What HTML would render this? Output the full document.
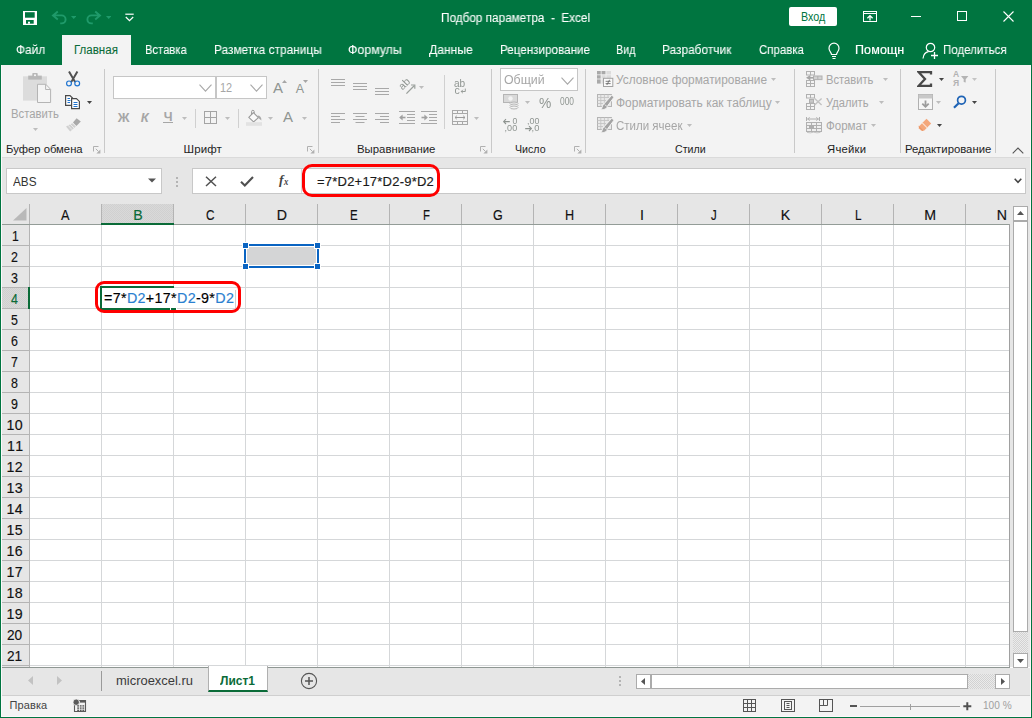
<!DOCTYPE html>
<html lang="ru"><head><meta charset="utf-8"><title>Подбор параметра - Excel</title>
<style>
html,body{margin:0;padding:0;background:#fff;}
body{width:1032px;height:718px;position:relative;overflow:hidden;font-family:"Liberation Sans","DejaVu Sans",sans-serif;}
.b{position:absolute;display:block;}
.t{position:absolute;white-space:pre;display:block;transform-origin:0 0;}
.dot{background:repeating-conic-gradient(#ebebeb 0 25%,#d2d2d2 0 50%) 0 0/2px 2px;}
.g{-webkit-text-stroke:0.15px currentColor;}
.dot2{background:repeating-conic-gradient(#d9d9d9 0 25%,#d0d0d0 0 50%) 0 0/2px 2px;}
#cellf i{font-style:normal;color:#2a80d0;}
</style></head>
<body>
<div id="titlebar" class="b" style="left:0;top:0;width:1032px;height:65px;background:#007540"></div>
<svg class="b" style="left:23px;top:11px;" width="14" height="14" viewBox="0 0 14 14"><rect x="0" y="0" width="14" height="14" fill="#fff"/><rect x="2" y="1.2" width="9.7" height="5.5" fill="#007540"/><rect x="3" y="9" width="7.7" height="3.7" fill="#007540"/><rect x="5" y="10.7" width="2" height="2" fill="#fff"/></svg>
<svg class="b" style="left:51px;top:10px;" width="16" height="15" viewBox="0 0 16 15"><path d="M6.8 1.4L2 5.4L6.8 9.4M2.2 5.4H10.6A4 4 0 0 1 10.6 13.4H9.2" fill="none" stroke="#1f9a6a" stroke-width="1.9" stroke-linejoin="miter"/></svg>
<svg class="b" style="left:70.7px;top:16px;" width="5.4" height="3" viewBox="0 0 5.4 3"><path d="M0 0H5.4 L2.7 3 Z" fill="#1f9a6a"/></svg>
<svg class="b" style="left:86px;top:10px;" width="16" height="15" viewBox="0 0 16 15"><path d="M9.2 1.4L14 5.4L9.2 9.4M13.8 5.4H5.4A4 4 0 0 0 5.4 13.4H6.8" fill="none" stroke="#1f9a6a" stroke-width="1.9" stroke-linejoin="miter"/></svg>
<svg class="b" style="left:105.8px;top:16px;" width="5.4" height="3" viewBox="0 0 5.4 3"><path d="M0 0H5.4 L2.7 3 Z" fill="#1f9a6a"/></svg>
<svg class="b" style="left:125px;top:13px;" width="9" height="9" viewBox="0 0 9 9"><path d="M0.3 1.2H8.7" stroke="#fff" stroke-width="1.2"/><path d="M0.8 4L4.5 7.6L8.2 4" fill="none" stroke="#fff" stroke-width="1.2"/></svg>
<span class="t" id="t1" style="left:441.00px;top:11px;font-size:12px;line-height:14px;color:#fff;transform:scaleX(0.9803);-webkit-text-stroke:0.08px;will-change:transform;">Подбор параметра  -  Excel</span>
<div class="b" style="left:789px;top:7px;width:48px;height:19px;background:#fff;border-radius:2px;"></div>
<span class="t" id="t2" style="left:801.00px;top:10px;font-size:12px;line-height:14px;color:#007540;transform:scaleX(0.8929);">Вход</span>
<svg class="b" style="left:863px;top:11px;" width="14" height="11" viewBox="0 0 14 11"><rect x="0.5" y="0.5" width="13" height="10" fill="none" stroke="#fff"/><path d="M0.5 2.5H13.5" stroke="#fff"/><path d="M7 9.6V4.8M4.4 7.2L7 4.6L9.6 7.2" fill="none" stroke="#fff" stroke-width="1.3"/></svg>
<div class="b" style="left:911px;top:16px;width:10px;height:1px;background:#fff;"></div>
<div class="b" style="left:957px;top:11px;width:10px;height:10px;border:1px solid #fff;box-sizing:border-box;"></div>
<svg class="b" style="left:1003px;top:11px;" width="11" height="11" viewBox="0 0 11 11"><path d="M0.5 0.5L10.5 10.5M10.5 0.5L0.5 10.5" stroke="#fff" stroke-width="1.1"/></svg>
<div class="b" style="left:62px;top:35px;width:69px;height:30px;background:#f3f3f3;"></div>
<span class="t" id="t3" style="left:16.00px;top:43px;font-size:12.5px;line-height:14px;color:#fff;transform:scaleX(0.9500);-webkit-text-stroke:0.08px;will-change:transform;">Файл</span>
<span class="t" id="t4" style="left:74.00px;top:43px;font-size:12.5px;line-height:14px;color:#0a6b38;transform:scaleX(0.9226);-webkit-text-stroke:0.08px;">Главная</span>
<span class="t" id="t5" style="left:145.30px;top:43px;font-size:12.5px;line-height:14px;color:#fff;transform:scaleX(0.9000);-webkit-text-stroke:0.08px;will-change:transform;">Вставка</span>
<span class="t" id="t6" style="left:214.30px;top:43px;font-size:12.5px;line-height:14px;color:#fff;transform:scaleX(0.9500);-webkit-text-stroke:0.08px;will-change:transform;">Разметка страницы</span>
<span class="t" id="t7" style="left:348.00px;top:43px;font-size:12.5px;line-height:14px;color:#fff;transform:scaleX(0.9870);-webkit-text-stroke:0.08px;will-change:transform;">Формулы</span>
<span class="t" id="t8" style="left:428.70px;top:43px;font-size:12.5px;line-height:14px;color:#fff;transform:scaleX(0.9689);-webkit-text-stroke:0.08px;will-change:transform;">Данные</span>
<span class="t" id="t9" style="left:499.70px;top:43px;font-size:12.5px;line-height:14px;color:#fff;transform:scaleX(0.9330);-webkit-text-stroke:0.08px;will-change:transform;">Рецензирование</span>
<span class="t" id="t10" style="left:616.30px;top:43px;font-size:12.5px;line-height:14px;color:#fff;transform:scaleX(0.8658);-webkit-text-stroke:0.08px;will-change:transform;">Вид</span>
<span class="t" id="t11" style="left:662.00px;top:43px;font-size:12.5px;line-height:14px;color:#fff;transform:scaleX(0.9503);-webkit-text-stroke:0.08px;will-change:transform;">Разработчик</span>
<span class="t" id="t12" style="left:758.70px;top:43px;font-size:12.5px;line-height:14px;color:#fff;transform:scaleX(0.9184);-webkit-text-stroke:0.08px;will-change:transform;">Справка</span>
<span class="t" id="t13" style="left:854.70px;top:43px;font-size:12.5px;line-height:14px;color:#fff;letter-spacing:0.120px;-webkit-text-stroke:0.2px;will-change:transform;">Помощн</span>
<span class="t" id="t14" style="left:942.70px;top:43px;font-size:12.5px;line-height:14px;color:#fff;transform:scaleX(0.9217);-webkit-text-stroke:0.08px;will-change:transform;">Поделиться</span>
<svg class="b" style="left:827px;top:42px;" width="14" height="18" viewBox="0 0 14 18"><path d="M4.5 12.5C4.5 10.5 2 9.5 2 6.2A5 5 0 0 1 12 6.2C12 9.5 9.5 10.5 9.5 12.5Z" fill="none" stroke="#fff" stroke-width="1.2"/><path d="M5 14.5H9M5.5 16.5H8.5" stroke="#fff" stroke-width="1.1"/></svg>
<svg class="b" style="left:922px;top:42px;" width="17" height="18" viewBox="0 0 17 18"><circle cx="8.5" cy="5.5" r="4.2" fill="none" stroke="#fff" stroke-width="1.2"/><path d="M1 16.5C1.5 12 4 10 6.5 9.6" fill="none" stroke="#fff" stroke-width="1.2"/><path d="M12.5 10V17M9 13.5H16" stroke="#fff" stroke-width="1.3"/></svg>
<div class="b" style="left:0px;top:65px;width:1032px;height:92px;background:#f3f3f3;"></div>
<div class="b" style="left:0px;top:157px;width:1032px;height:1px;background:#dadada;"></div>
<div class="b" style="left:104px;top:69px;width:1px;height:84px;background:#c9c9c9;"></div>
<div class="b" style="left:318px;top:69px;width:1px;height:84px;background:#c9c9c9;"></div>
<div class="b" style="left:491px;top:69px;width:1px;height:84px;background:#c9c9c9;"></div>
<div class="b" style="left:585px;top:69px;width:1px;height:84px;background:#c9c9c9;"></div>
<div class="b" style="left:794px;top:69px;width:1px;height:84px;background:#c9c9c9;"></div>
<div class="b" style="left:900px;top:69px;width:1px;height:84px;background:#c9c9c9;"></div>
<div class="b" style="left:995px;top:69px;width:1px;height:84px;background:#c9c9c9;"></div>
<span class="t" id="t15" style="left:6.00px;top:143px;font-size:11.5px;line-height:12px;color:#1e1e1e;transform:scaleX(0.9808);">Буфер обмена</span>
<span class="t" id="t16" style="left:183.50px;top:143px;font-size:11.5px;line-height:12px;color:#1e1e1e;letter-spacing:0.125px;">Шрифт</span>
<span class="t" id="t17" style="left:356.50px;top:143px;font-size:11.5px;line-height:12px;color:#1e1e1e;transform:scaleX(0.9905);">Выравнивание</span>
<span class="t" id="t18" style="left:515.00px;top:143px;font-size:11.5px;line-height:12px;color:#1e1e1e;transform:scaleX(0.9242);">Число</span>
<span class="t" id="t19" style="left:675.00px;top:143px;font-size:11.5px;line-height:12px;color:#1e1e1e;transform:scaleX(0.9242);">Стили</span>
<span class="t" id="t20" style="left:827.00px;top:143px;font-size:11.5px;line-height:12px;color:#1e1e1e;letter-spacing:0.250px;transform:scaleX(0.9812);">Ячейки</span>
<span class="t" id="t21" style="left:905.00px;top:143px;font-size:11.5px;line-height:12px;color:#1e1e1e;transform:scaleX(0.9852);">Редактирование</span>
<svg class="b" style="left:93px;top:146px;" width="8" height="8" viewBox="0 0 8 8"><path d="M0.5 5.5V0.5H5.5" fill="none" stroke="#b0b0b0" stroke-width="1"/><path d="M2.8 2.8L5.4 5.4" stroke="#b0b0b0" stroke-width="1"/><path d="M7.4 3.4V7.4H3.4Z" fill="#b0b0b0"/></svg>
<svg class="b" style="left:307px;top:146px;" width="8" height="8" viewBox="0 0 8 8"><path d="M0.5 5.5V0.5H5.5" fill="none" stroke="#b0b0b0" stroke-width="1"/><path d="M2.8 2.8L5.4 5.4" stroke="#b0b0b0" stroke-width="1"/><path d="M7.4 3.4V7.4H3.4Z" fill="#b0b0b0"/></svg>
<svg class="b" style="left:480px;top:146px;" width="8" height="8" viewBox="0 0 8 8"><path d="M0.5 5.5V0.5H5.5" fill="none" stroke="#b0b0b0" stroke-width="1"/><path d="M2.8 2.8L5.4 5.4" stroke="#b0b0b0" stroke-width="1"/><path d="M7.4 3.4V7.4H3.4Z" fill="#b0b0b0"/></svg>
<svg class="b" style="left:574px;top:146px;" width="8" height="8" viewBox="0 0 8 8"><path d="M0.5 5.5V0.5H5.5" fill="none" stroke="#b0b0b0" stroke-width="1"/><path d="M2.8 2.8L5.4 5.4" stroke="#b0b0b0" stroke-width="1"/><path d="M7.4 3.4V7.4H3.4Z" fill="#b0b0b0"/></svg>
<svg class="b" style="left:1012px;top:147px;" width="12" height="7" viewBox="0 0 12 7"><path d="M0.7 6.3L6 1L11.3 6.3" fill="none" stroke="#555" stroke-width="1.1"/></svg>
<svg class="b" style="left:23px;top:72px;" width="29" height="32" viewBox="0 0 29 32"><rect x="0" y="4.3" width="24" height="24.3" fill="#dcdcdc"/>
<rect x="5.2" y="3.6" width="13.6" height="4" fill="#b8b8b8"/><rect x="9.3" y="1" width="5.4" height="3.5" rx="0.8" fill="#b8b8b8"/><rect x="11" y="2.4" width="2" height="1.7" fill="#f3f3f3"/>
<path d="M14.5 12.3H22.8L27.6 17.3V30.5H14.5Z" fill="#f4f4f4" stroke="#b4b4b4"/><path d="M22.6 12.5V17.5H27.4" fill="none" stroke="#b4b4b4"/></svg>
<span class="t" id="t22" style="left:11.00px;top:107px;font-size:12px;line-height:14px;color:#a6a6a6;transform:scaleX(0.9412);">Вставить</span>
<svg class="b" style="left:33px;top:128px;" width="5" height="3" viewBox="0 0 5 3"><path d="M0 0H5 L2.5 3 Z" fill="#bdbdbd"/></svg>
<svg class="b" style="left:64px;top:70px;" width="18" height="18" viewBox="0 0 18 18"><path d="M5 1.6L10.6 11.2L12.4 12.6M13.4 1.6L7.8 11.2L6 12.6" stroke="#505050" stroke-width="2" fill="none"/>
<circle cx="5" cy="13.4" r="2.4" fill="#f3f3f3" stroke="#1f74d0" stroke-width="1.2"/><circle cx="13.2" cy="13.4" r="2.4" fill="#f3f3f3" stroke="#1f74d0" stroke-width="1.2"/></svg>
<svg class="b" style="left:65px;top:95px;" width="16" height="15" viewBox="0 0 16 15"><path d="M0.6 0.6H5L7.5 3V10.4H0.6Z" fill="#fff" stroke="#4a4a4a" stroke-width="1.2"/><path d="M2.5 3.5H5M2.5 5.5H5.5M2.5 7.5H5" stroke="#1f74d0"/>
<path d="M6.6 3.6H11.4L14.4 6.4V13.6H6.6Z" fill="#fff" stroke="#4a4a4a" stroke-width="1.2"/><path d="M8.5 7.5H12.5M8.5 9.5H12.5M8.5 11.5H12.5" stroke="#1f74d0"/></svg>
<svg class="b" style="left:87px;top:101px;" width="5" height="3" viewBox="0 0 5 3"><path d="M0 0H5 L2.5 3 Z" fill="#444"/></svg>
<svg class="b" style="left:65px;top:117px;" width="17" height="15" viewBox="0 0 17 15"><path d="M11.6 1.2L15.8 4.4L11.4 9L8 5.6Z" fill="#a9a9a9"/><path d="M7.4 6.2L10.8 9.6L5.2 14.4L1 9.6Z" fill="#d0d0d0"/>
<path d="M3 8.2L7 12.6M5 7L9 11" stroke="#f3f3f3" stroke-width="0.8"/></svg>
<div class="b" style="left:113px;top:76px;width:103px;height:23px;background:#fff;border:1px solid #c6c6c6;box-sizing:border-box;"></div>
<div class="b" style="left:216px;top:76px;width:51px;height:23px;background:#fff;border:1px solid #c6c6c6;box-sizing:border-box;"></div>
<svg class="b" style="left:199px;top:84px;" width="13" height="8" viewBox="0 0 13 8"><path d="M0.5 0.7L6.5 7.2L12.5 0.7" fill="none" stroke="#a8a8a8" stroke-width="1.1"/></svg>
<svg class="b" style="left:250px;top:84px;" width="13" height="8" viewBox="0 0 13 8"><path d="M0.5 0.7L6.5 7.2L12.5 0.7" fill="none" stroke="#a8a8a8" stroke-width="1.1"/></svg>
<span class="t" id="t23" style="left:220.00px;top:80px;font-size:13px;line-height:15px;color:#a6a6a6;transform:scaleX(0.8400);">12</span>
<span class="t" id="t24" style="left:273.00px;top:79px;font-size:15px;line-height:17px;color:#8f9591;">A</span>
<svg class="b" style="left:282px;top:80px;" width="5" height="3" viewBox="0 0 5 3"><path d="M0 3L2.5 0L5 3Z" fill="#a6a6a6"/></svg>
<span class="t" id="t25" style="left:295.75px;top:82px;font-size:12.5px;line-height:14px;color:#8f9591;">A</span>
<svg class="b" style="left:303px;top:80px;" width="5" height="3" viewBox="0 0 5 3"><path d="M0 0L2.5 3L5 0Z" fill="#a6a6a6"/></svg>
<span class="t" id="t26" style="left:117.75px;top:110px;font-size:13px;line-height:15px;color:#a6a6a6;font-weight:bold;">Ж</span>
<span class="t" id="t27" style="left:140.75px;top:110px;font-size:13px;line-height:15px;color:#a6a6a6;font-weight:bold;font-style:italic;">К</span>
<span class="t" id="t28" style="left:163.75px;top:110px;font-size:12.5px;line-height:14px;color:#a6a6a6;font-weight:bold;">Ч</span>
<div class="b" style="left:163px;top:122px;width:10px;height:1px;background:#a6a6a6;"></div>
<svg class="b" style="left:182px;top:117px;" width="5" height="3" viewBox="0 0 5 3"><path d="M0 0H5 L2.5 3 Z" fill="#bdbdbd"/></svg>
<div class="b" style="left:195px;top:109px;width:1px;height:19px;background:#d0d0d0;"></div>
<svg class="b" style="left:204px;top:111px;" width="13" height="13" viewBox="0 0 13 13"><rect x="0.5" y="0.5" width="12" height="12" fill="none" stroke="#a4a4a4"/><path d="M6.5 0.5V12.5M0.5 6.5H12.5" stroke="#a4a4a4"/></svg>
<svg class="b" style="left:225px;top:117px;" width="5" height="3" viewBox="0 0 5 3"><path d="M0 0H5 L2.5 3 Z" fill="#bdbdbd"/></svg>
<div class="b" style="left:238px;top:109px;width:1px;height:19px;background:#d0d0d0;"></div>
<svg class="b" style="left:246px;top:109px;" width="17" height="17" viewBox="0 0 17 17"><path d="M7.4 3.6L12.4 8.6L7.6 12.8L2.8 8.4Z" fill="#fafafa" stroke="#9a9a9a" stroke-width="1.1" stroke-linejoin="round"/><path d="M5.6 6V2.6A1.3 1.3 0 0 1 8.2 2.6V4.4" fill="none" stroke="#9a9a9a" stroke-width="1"/><path d="M11.6 6.6C13.8 6.6 15.6 8.4 15.4 11.4L12.4 9Z" fill="#a8a8a8"/><rect x="0" y="13.2" width="16" height="3.6" fill="#e2e2e2"/></svg>
<svg class="b" style="left:268px;top:117px;" width="5" height="3" viewBox="0 0 5 3"><path d="M0 0H5 L2.5 3 Z" fill="#bdbdbd"/></svg>
<span class="t" id="t29" style="left:283.00px;top:108px;font-size:15px;line-height:17px;color:#8f9591;">A</span>
<svg class="b" style="left:302px;top:117px;" width="5" height="3" viewBox="0 0 5 3"><path d="M0 0H5 L2.5 3 Z" fill="#bdbdbd"/></svg>
<svg class="b" style="left:331px;top:0px;" width="16" height="140" viewBox="0 0 16 140"><path d="M0 79.5H14M0 82.5H14M0 85.5H14" stroke="#a8a8a8"/></svg>
<svg class="b" style="left:353px;top:0px;" width="16" height="140" viewBox="0 0 16 140"><path d="M0 83.5H14M0 86.5H14M0 89.5H14" stroke="#a8a8a8"/></svg>
<svg class="b" style="left:375px;top:0px;" width="16" height="140" viewBox="0 0 16 140"><path d="M0 88.5H14M0 91.5H14M0 94.5H14" stroke="#a8a8a8"/></svg>
<svg class="b" style="left:331px;top:0px;" width="16" height="140" viewBox="0 0 16 140"><path d="M0 113.5H14M0 116.5H9M0 119.5H14M0 122.5H9" stroke="#a8a8a8"/></svg>
<svg class="b" style="left:353px;top:0px;" width="16" height="140" viewBox="0 0 16 140"><path d="M0 113.5H14M2.5 116.5H11.5M0 119.5H14M2.5 122.5H11.5" stroke="#a8a8a8"/></svg>
<svg class="b" style="left:375px;top:0px;" width="16" height="140" viewBox="0 0 16 140"><path d="M0 113.5H14M5 116.5H14M0 119.5H14M5 122.5H14" stroke="#a8a8a8"/></svg>
<svg class="b" style="left:398px;top:77px;" width="19" height="19" viewBox="0 0 19 19"><text x="0" y="0" font-size="10.5" font-family="Liberation Sans, sans-serif" fill="#8e9490" transform="translate(4.6 13.4) rotate(-45)">ab</text><path d="M8.4 16.6L16.2 8.8" fill="none" stroke="#9aa09c" stroke-width="1.3"/><path d="M13 8H16.8V11.8" fill="none" stroke="#9aa09c" stroke-width="1.2"/></svg>
<svg class="b" style="left:419px;top:86px;" width="5" height="3" viewBox="0 0 5 3"><path d="M0 0H5 L2.5 3 Z" fill="#bdbdbd"/></svg>
<svg class="b" style="left:399px;top:111px;" width="17" height="13" viewBox="0 0 17 13"><path d="M0 0.5H16M8 3.5H16M8 6.5H16M8 9.5H16M0 12.5H16" stroke="#a8a8a8"/><path d="M6.5 6.5H1.6" stroke="#a0a0a0" stroke-width="1.6"/><path d="M0.2 6.5L3.6 3.6V9.4Z" fill="#a0a0a0"/></svg>
<svg class="b" style="left:421px;top:111px;" width="17" height="13" viewBox="0 0 17 13"><path d="M0 0.5H16M8 3.5H16M8 6.5H16M8 9.5H16M0 12.5H16" stroke="#a8a8a8"/><path d="M0.5 6.5H5.4" stroke="#a0a0a0" stroke-width="1.6"/><path d="M6.8 6.5L3.4 3.6V9.4Z" fill="#a0a0a0"/></svg>
<div class="b" style="left:444px;top:75px;width:1px;height:54px;background:#d0d0d0;"></div>
<span class="t" id="t30" style="left:454.00px;top:77px;font-size:10.5px;line-height:12px;color:#8e9490;transform:scaleX(0.9583);">ab</span>
<span class="t" id="t31" style="left:454.50px;top:84px;font-size:10.5px;line-height:12px;color:#8e9490;">c</span>
<svg class="b" style="left:460px;top:88px;" width="6" height="6" viewBox="0 0 6 6"><path d="M5.3 0.6V3.5H1.2M2.9 1.8L1.2 3.5L2.9 5.2" fill="none" stroke="#8e9490" stroke-width="0.9"/></svg>
<svg class="b" style="left:452px;top:110px;" width="16" height="15" viewBox="0 0 16 15"><rect x="0.5" y="0.5" width="15" height="14" fill="none" stroke="#a8a8a8"/><path d="M0.5 3.5H15.5M0.5 11.5H15.5M5.5 0.5V3.5M10.5 0.5V3.5M5.5 11.5V14.5M10.5 11.5V14.5" stroke="#a8a8a8"/><path d="M3 7.5H13M4.8 5.8L3 7.5L4.8 9.2M11.2 5.8L13 7.5L11.2 9.2" fill="none" stroke="#9a9a9a"/></svg>
<svg class="b" style="left:474px;top:117px;" width="5" height="3" viewBox="0 0 5 3"><path d="M0 0H5 L2.5 3 Z" fill="#bdbdbd"/></svg>
<div class="b" style="left:500px;top:68px;width:78px;height:23px;background:#fff;border:1px solid #c6c6c6;box-sizing:border-box;"></div>
<span class="t" id="t32" style="left:504.00px;top:73px;font-size:12.5px;line-height:14px;color:#a6a6a6;transform:scaleX(0.9882);">Общий</span>
<svg class="b" style="left:561px;top:77px;" width="13" height="8" viewBox="0 0 13 8"><path d="M0.5 0.7L6.5 7.2L12.5 0.7" fill="none" stroke="#a8a8a8" stroke-width="1.1"/></svg>
<svg class="b" style="left:503px;top:94px;" width="17" height="16" viewBox="0 0 17 16"><rect x="0.5" y="0.5" width="14" height="8" fill="#d9d9d9" stroke="#b5b5b5"/><circle cx="7.5" cy="4.5" r="2.2" fill="#f3f3f3"/><ellipse cx="11" cy="9.5" rx="4" ry="1.5" fill="#f3f3f3" stroke="#b5b5b5"/><ellipse cx="11" cy="11.5" rx="4" ry="1.5" fill="#f3f3f3" stroke="#b5b5b5"/><ellipse cx="11" cy="13.5" rx="4" ry="1.5" fill="#f3f3f3" stroke="#b5b5b5"/></svg>
<svg class="b" style="left:525px;top:101px;" width="5" height="3" viewBox="0 0 5 3"><path d="M0 0H5 L2.5 3 Z" fill="#bdbdbd"/></svg>
<span class="t" id="t33" style="left:539.40px;top:94px;font-size:15px;line-height:17px;color:#909692;transform:scaleX(0.9231);">%</span>
<span class="t" id="t34" style="left:560.00px;top:96px;font-size:10px;line-height:11px;color:#909692;transform:scaleX(0.8400);">000</span>
<svg class="b" style="left:503px;top:117px;" width="16" height="16" viewBox="0 0 16 16"><text x="9.6" y="6.6" font-size="8.6" font-family="Liberation Sans, sans-serif" fill="#8e9490">0</text><text x="1.6" y="14.2" font-size="8.6" font-family="Liberation Sans, sans-serif" fill="#8e9490" textLength="12.6" lengthAdjust="spacingAndGlyphs">,00</text><path d="M6.8 4.6H0.8M3 2.2L0.6 4.6L3 7" fill="none" stroke="#8e9490" stroke-width="1.1"/></svg>
<svg class="b" style="left:525px;top:117px;" width="16" height="16" viewBox="0 0 16 16"><text x="2" y="6.6" font-size="8.6" font-family="Liberation Sans, sans-serif" fill="#8e9490" textLength="12.4" lengthAdjust="spacingAndGlyphs">,00</text><text x="6.6" y="14.2" font-size="8.6" font-family="Liberation Sans, sans-serif" fill="#8e9490" textLength="7.8" lengthAdjust="spacingAndGlyphs">,0</text><path d="M0.2 11.6H6.2M4 9.2L6.4 11.6L4 14" fill="none" stroke="#8e9490" stroke-width="1.1"/></svg>
<svg class="b" style="left:597px;top:71px;" width="17" height="16" viewBox="0 0 17 16"><rect x="0" y="0" width="14" height="12.6" fill="#dcdcdc"/><path d="M0 0H8.6V3.4H3.8V12.6H0Z" fill="#a9a9a9"/><path d="M4.2 0V12.6M9 0V12.6M0 3.8H14M0 8H14" stroke="#f3f3f3" stroke-width="0.8"/><rect x="6.5" y="7.3" width="9.3" height="8.2" fill="#fafafa" stroke="#a2a2a2"/><path d="M8.6 10.3H13.6M8.6 12.6H13.6M12.6 8.8L9.8 14" stroke="#6e6e6e" stroke-width="0.9"/></svg>
<svg class="b" style="left:597px;top:94px;" width="17" height="16" viewBox="0 0 17 16"><rect x="0.5" y="0.5" width="14" height="12" fill="#e9e9e9" stroke="#b4b4b4"/><path d="M0.5 3.5H14.5M0.5 6.5H9M0.5 9.5H6M3.8 0.5V12.5M7.4 0.5V9M11 0.5V4" stroke="#c4c4c4" stroke-width="0.9"/><path d="M14.8 1.2L17 3.2L10.8 11.6C10.6 14.2 7.6 15.9 3.6 15.9C5.4 14.6 4.6 12.4 6.6 10.2Z" fill="#a3a3a3" stroke="#f3f3f3" stroke-width="1"/><path d="M7.6 10.6L10.2 12.6" stroke="#f3f3f3" stroke-width="0.8"/></svg>
<svg class="b" style="left:597px;top:117px;" width="17" height="16" viewBox="0 0 17 16"><rect x="0.5" y="0.5" width="14" height="12" fill="#e9e9e9" stroke="#b4b4b4"/><path d="M0.5 3.5H14.5M0.5 6.5H9M0.5 9.5H6M3.8 0.5V12.5M7.4 0.5V9M11 0.5V4" stroke="#c4c4c4" stroke-width="0.9"/><path d="M14.8 1.2L17 3.2L10.8 11.6C10.6 14.2 7.6 15.9 3.6 15.9C5.4 14.6 4.6 12.4 6.6 10.2Z" fill="#a3a3a3" stroke="#f3f3f3" stroke-width="1"/><path d="M7.6 10.6L10.2 12.6" stroke="#f3f3f3" stroke-width="0.8"/></svg>
<span class="t" id="t35" style="left:615.50px;top:73px;font-size:12.5px;line-height:14px;color:#a6a6a6;transform:scaleX(0.9497);">Условное форматирование</span>
<svg class="b" style="left:771px;top:78px;" width="5" height="3" viewBox="0 0 5 3"><path d="M0 0H5 L2.5 3 Z" fill="#bdbdbd"/></svg>
<span class="t" id="t36" style="left:615.50px;top:96px;font-size:12.5px;line-height:14px;color:#a6a6a6;transform:scaleX(0.9571);">Форматировать как таблицу</span>
<svg class="b" style="left:775px;top:101px;" width="5" height="3" viewBox="0 0 5 3"><path d="M0 0H5 L2.5 3 Z" fill="#bdbdbd"/></svg>
<span class="t" id="t37" style="left:615.50px;top:119px;font-size:12.5px;line-height:14px;color:#a6a6a6;transform:scaleX(0.9212);">Стили ячеек</span>
<svg class="b" style="left:687px;top:124px;" width="5" height="3" viewBox="0 0 5 3"><path d="M0 0H5 L2.5 3 Z" fill="#bdbdbd"/></svg>
<svg class="b" style="left:806px;top:71px;" width="17" height="17" viewBox="0 0 17 17"><rect x="0.5" y="0.5" width="8" height="3.5" fill="none" stroke="#b0b0b0"/><path d="M4.5 0.5V4" stroke="#b0b0b0"/><rect x="0.5" y="9.5" width="8" height="6" fill="none" stroke="#b0b0b0"/><path d="M4.5 9.5V15.5M0.5 12.5H8.5" stroke="#b0b0b0"/><rect x="7.5" y="5" width="8.5" height="3.6" fill="#d2d2d2" stroke="#b0b0b0"/><path d="M11.8 5V8.6" stroke="#b0b0b0"/><path d="M0 6.8L4.4 4V9.6Z" fill="#a6a6a6"/><path d="M4 6.8H7.5" stroke="#a6a6a6" stroke-width="1.6"/></svg>
<svg class="b" style="left:806px;top:94px;" width="17" height="17" viewBox="0 0 17 17"><rect x="0.5" y="0.5" width="8" height="3.5" fill="none" stroke="#b0b0b0"/><path d="M4.5 0.5V4" stroke="#b0b0b0"/><rect x="3.5" y="5.5" width="4" height="3.5" fill="#c6c6c6" stroke="#b0b0b0"/><rect x="0.5" y="9.5" width="8" height="6" fill="none" stroke="#b0b0b0"/><path d="M4.5 9.5V15.5M0.5 12.5H8.5" stroke="#b0b0b0"/><path d="M8.6 4.4L15.6 11M15.6 4.4L8.6 11" stroke="#c2c2c2" stroke-width="1.4"/></svg>
<svg class="b" style="left:806px;top:117px;" width="17" height="17" viewBox="0 0 17 17"><path d="M0.5 0V4M13.5 0V4M1.5 2H12.5" stroke="#b0b0b0"/><path d="M3.8 0.4L1.6 2L3.8 3.6M10.2 0.4L12.4 2L10.2 3.6" fill="none" stroke="#b0b0b0" stroke-width="0.9"/><rect x="0.5" y="5.5" width="15" height="9" fill="#eeeeee" stroke="#b0b0b0"/><path d="M5.5 5.5V14.5M10.5 5.5V14.5M0.5 8.5H15.5M0.5 11.5H15.5" stroke="#b0b0b0"/><rect x="3" y="8" width="5" height="4" fill="#adadad"/><path d="M1 15.4Q4.2 16.4 7.6 15.2Q11 16.4 14.4 15.4" fill="none" stroke="#c0c0c0" stroke-width="0.9"/></svg>
<span class="t" id="t38" style="left:826.00px;top:73px;font-size:12.5px;line-height:14px;color:#a6a6a6;transform:scaleX(0.8942);">Вставить</span>
<svg class="b" style="left:883px;top:78px;" width="5" height="3" viewBox="0 0 5 3"><path d="M0 0H5 L2.5 3 Z" fill="#bdbdbd"/></svg>
<span class="t" id="t39" style="left:826.00px;top:96px;font-size:12.5px;line-height:14px;color:#a6a6a6;transform:scaleX(0.8906);">Удалить</span>
<svg class="b" style="left:879px;top:101px;" width="5" height="3" viewBox="0 0 5 3"><path d="M0 0H5 L2.5 3 Z" fill="#bdbdbd"/></svg>
<span class="t" id="t40" style="left:826.00px;top:119px;font-size:12.5px;line-height:14px;color:#a6a6a6;transform:scaleX(0.9222);">Формат</span>
<svg class="b" style="left:871px;top:124px;" width="5" height="3" viewBox="0 0 5 3"><path d="M0 0H5 L2.5 3 Z" fill="#bdbdbd"/></svg>
<svg class="b" style="left:917px;top:71px;" width="16" height="16" viewBox="0 0 16 16"><path d="M14 3.5V1H1.5L8 8L1.5 15H14V12.5" fill="none" stroke="#484848" stroke-width="2.3"/></svg>
<svg class="b" style="left:939px;top:78px;" width="5" height="3" viewBox="0 0 5 3"><path d="M0 0H5 L2.5 3 Z" fill="#444"/></svg>
<svg class="b" style="left:918px;top:94px;" width="15" height="16" viewBox="0 0 15 16"><rect x="0.5" y="0.5" width="14" height="15" fill="#f6f6f6" stroke="#b0b0b0"/><rect x="0.5" y="0.5" width="14" height="4" fill="#c8c8c8"/><path d="M7.5 6.4V12.6M4.3 9.6L7.5 12.8L10.7 9.6" fill="none" stroke="#9c9c9c" stroke-width="1.8"/></svg>
<svg class="b" style="left:936px;top:101px;" width="5" height="3" viewBox="0 0 5 3"><path d="M0 0H5 L2.5 3 Z" fill="#bdbdbd"/></svg>
<svg class="b" style="left:918px;top:118px;" width="14" height="14" viewBox="0 0 14 14"><path d="M8.5 0.8L13.2 5.5L6 12.7H3.2L0.8 10.3V8.5Z" fill="#f4a77a"/><path d="M4.2 4.8L9.2 9.8" stroke="#fbe0cf" stroke-width="1.2"/><path d="M0.8 8.5L5 12.7" stroke="#e58e5e"/></svg>
<svg class="b" style="left:937px;top:124px;" width="5" height="3" viewBox="0 0 5 3"><path d="M0 0H5 L2.5 3 Z" fill="#444"/></svg>
<span class="t" id="t41" style="left:953.00px;top:69px;font-size:8.5px;line-height:10px;color:#b2b2b2;font-weight:bold;">А</span>
<span class="t" id="t42" style="left:953.00px;top:78px;font-size:8.5px;line-height:10px;color:#b2b2b2;font-weight:bold;">Я</span>
<svg class="b" style="left:961px;top:76px;" width="8" height="8" viewBox="0 0 8 8"><path d="M0 0H7.4L4.7 3.2V6.6L2.7 6V3.2Z" fill="#b4b4b4"/></svg>
<svg class="b" style="left:972px;top:78px;" width="5" height="3" viewBox="0 0 5 3"><path d="M0 0H5 L2.5 3 Z" fill="#c4c4c4"/></svg>
<svg class="b" style="left:953px;top:95px;" width="14" height="14" viewBox="0 0 14 14"><circle cx="8.5" cy="5.2" r="3.9" fill="none" stroke="#1e63b5" stroke-width="1.7"/><path d="M5.6 8.2L1 12.8" stroke="#1e63b5" stroke-width="2.2"/></svg>
<svg class="b" style="left:972px;top:101px;" width="5" height="3" viewBox="0 0 5 3"><path d="M0 0H5 L2.5 3 Z" fill="#444"/></svg>
<div class="b" style="left:0px;top:158px;width:1032px;height:46px;background:#e6e6e6;"></div>
<div class="b" style="left:6px;top:168px;width:156px;height:26px;background:#fff;border:1px solid #c8c8c8;box-sizing:border-box;"></div>
<span class="t" id="t43" style="left:12.50px;top:175px;font-size:12.5px;line-height:14px;color:#333;transform:scaleX(0.9400);">ABS</span>
<svg class="b" style="left:148px;top:178px;" width="8" height="5" viewBox="0 0 8 5"><path d="M0 0.5H8L4 4.5Z" fill="#555"/></svg>
<div class="b" style="left:176px;top:177px;width:2px;height:2px;background:#b4b4b4;"></div>
<div class="b" style="left:176px;top:181px;width:2px;height:2px;background:#b4b4b4;"></div>
<div class="b" style="left:176px;top:185px;width:2px;height:2px;background:#b4b4b4;"></div>
<div class="b" style="left:192px;top:168px;width:834px;height:26px;background:#fff;border:1px solid #c8c8c8;box-sizing:border-box;"></div>
<div class="b" style="left:301px;top:169px;width:1px;height:24px;background:#dcdcdc;"></div>
<svg class="b" style="left:205px;top:176px;" width="12" height="11" viewBox="0 0 12 11"><path d="M1 0.8L11 10M11 0.8L1 10" stroke="#505050" stroke-width="1.5"/></svg>
<svg class="b" style="left:240px;top:176px;" width="14" height="11" viewBox="0 0 14 11"><path d="M1 5.8L4.8 9.4L13 0.9" fill="none" stroke="#505050" stroke-width="2.1"/></svg>
<span class="t" id="t44" style="left:279.00px;top:172px;font-size:13.5px;line-height:15px;color:#444;font-weight:bold;font-style:italic;font-family:'Liberation Serif',serif;">f</span>
<span class="t" id="t45" style="left:283.80px;top:176px;font-size:10px;line-height:11px;color:#444;font-weight:bold;font-style:italic;transform:scaleX(0.8667);font-family:'Liberation Serif',serif;">x</span>
<span class="t" id="t46" style="left:317.00px;top:174px;font-size:13px;line-height:15px;color:#1a1a1a;letter-spacing:0.220px;-webkit-text-stroke:0.15px;">=7*D2+17*D2-9*D2</span>
<svg class="b" style="left:1014px;top:178px;" width="8" height="6" viewBox="0 0 8 6"><path d="M0.7 0.8L4 4.3L7.3 0.8" fill="none" stroke="#444" stroke-width="1.6"/></svg>
<div class="b" style="left:302px;top:164px;width:137.6px;height:32.5px;border:3px solid #ff0000;box-sizing:border-box;border-radius:10px;"></div>
<div class="b" style="left:0px;top:204px;width:1032px;height:463px;background:#e6e6e6;"></div>
<div class="b" style="left:30px;top:225px;width:980px;height:442px;background:#fff;"></div>
<div class="b dot2" style="left:102px;top:204px;width:71px;height:19px;"></div>
<div class="b" style="left:101px;top:223px;width:73px;height:2px;background:#0a6b38;"></div>
<div class="b dot2" style="left:2px;top:288px;width:26px;height:20px;"></div>
<svg class="b" style="left:13px;top:208px;" width="14" height="13" viewBox="0 0 14 13"><path d="M13.5 0V12.5H0Z" fill="#b9b9b9"/></svg>
<div class="b" style="left:29px;top:204px;width:1px;height:20px;background:#b4b4b4;"></div>
<span class="t" id="t47" style="left:61.00px;top:207px;font-size:14.2px;line-height:16px;color:#111;transform:scaleX(0.9000);-webkit-text-stroke:0.15px;">A</span>
<div class="b" style="left:101px;top:204px;width:1px;height:20px;background:#b4b4b4;"></div>
<span class="t" id="t48" style="left:133.25px;top:207px;font-size:14.2px;line-height:16px;color:#0a6b38;-webkit-text-stroke:0.15px;">B</span>
<div class="b" style="left:101px;top:225px;width:1px;height:442px;background:#d5d7d9;"></div>
<div class="b" style="left:173px;top:204px;width:1px;height:20px;background:#b4b4b4;"></div>
<span class="t" id="t49" style="left:205.85px;top:207px;font-size:14.2px;line-height:16px;color:#111;transform:scaleX(0.8300);-webkit-text-stroke:0.15px;">C</span>
<div class="b" style="left:173px;top:225px;width:1px;height:442px;background:#d5d7d9;"></div>
<div class="b" style="left:245px;top:204px;width:1px;height:20px;background:#b4b4b4;"></div>
<span class="t" id="t50" style="left:276.75px;top:207px;font-size:14.2px;line-height:16px;color:#111;-webkit-text-stroke:0.15px;">D</span>
<div class="b" style="left:245px;top:225px;width:1px;height:442px;background:#d5d7d9;"></div>
<div class="b" style="left:317px;top:204px;width:1px;height:20px;background:#b4b4b4;"></div>
<span class="t" id="t51" style="left:349.75px;top:207px;font-size:14.2px;line-height:16px;color:#111;transform:scaleX(0.8125);-webkit-text-stroke:0.15px;">E</span>
<div class="b" style="left:317px;top:225px;width:1px;height:442px;background:#d5d7d9;"></div>
<div class="b" style="left:389px;top:204px;width:1px;height:20px;background:#b4b4b4;"></div>
<span class="t" id="t52" style="left:422.50px;top:207px;font-size:14.2px;line-height:16px;color:#111;transform:scaleX(0.8000);-webkit-text-stroke:0.15px;">F</span>
<div class="b" style="left:389px;top:225px;width:1px;height:442px;background:#d5d7d9;"></div>
<div class="b" style="left:461px;top:204px;width:1px;height:20px;background:#b4b4b4;"></div>
<span class="t" id="t53" style="left:493.10px;top:207px;font-size:14.2px;line-height:16px;color:#111;transform:scaleX(0.8800);-webkit-text-stroke:0.15px;">G</span>
<div class="b" style="left:461px;top:225px;width:1px;height:442px;background:#d5d7d9;"></div>
<div class="b" style="left:533px;top:204px;width:1px;height:20px;background:#b4b4b4;"></div>
<span class="t" id="t54" style="left:565.00px;top:207px;font-size:14.2px;line-height:16px;color:#111;transform:scaleX(0.8889);-webkit-text-stroke:0.15px;">H</span>
<div class="b" style="left:533px;top:225px;width:1px;height:442px;background:#d5d7d9;"></div>
<div class="b" style="left:605px;top:204px;width:1px;height:20px;background:#b4b4b4;"></div>
<span class="t" id="t55" style="left:640.10px;top:207px;font-size:14.2px;line-height:16px;color:#111;-webkit-text-stroke:0.15px;">I</span>
<div class="b" style="left:605px;top:225px;width:1px;height:442px;background:#d5d7d9;"></div>
<div class="b" style="left:677px;top:204px;width:1px;height:20px;background:#b4b4b4;"></div>
<span class="t" id="t56" style="left:711.40px;top:207px;font-size:14.2px;line-height:16px;color:#111;transform:scaleX(0.8000);-webkit-text-stroke:0.15px;">J</span>
<div class="b" style="left:677px;top:225px;width:1px;height:442px;background:#d5d7d9;"></div>
<div class="b" style="left:749px;top:204px;width:1px;height:20px;background:#b4b4b4;"></div>
<span class="t" id="t57" style="left:780.70px;top:207px;font-size:14.2px;line-height:16px;color:#111;-webkit-text-stroke:0.15px;">K</span>
<div class="b" style="left:749px;top:225px;width:1px;height:442px;background:#d5d7d9;"></div>
<div class="b" style="left:821px;top:204px;width:1px;height:20px;background:#b4b4b4;"></div>
<span class="t" id="t58" style="left:854.60px;top:207px;font-size:14.2px;line-height:16px;color:#111;transform:scaleX(0.8286);-webkit-text-stroke:0.15px;">L</span>
<div class="b" style="left:821px;top:225px;width:1px;height:442px;background:#d5d7d9;"></div>
<div class="b" style="left:893px;top:204px;width:1px;height:20px;background:#b4b4b4;"></div>
<span class="t" id="t59" style="left:924.20px;top:207px;font-size:14.2px;line-height:16px;color:#111;-webkit-text-stroke:0.15px;">M</span>
<div class="b" style="left:893px;top:225px;width:1px;height:442px;background:#d5d7d9;"></div>
<div class="b" style="left:965px;top:204px;width:1px;height:20px;background:#b4b4b4;"></div>
<span class="t" id="t60" style="left:996.75px;top:207px;font-size:14.2px;line-height:16px;color:#111;-webkit-text-stroke:0.15px;">N</span>
<div class="b" style="left:965px;top:225px;width:1px;height:442px;background:#d5d7d9;"></div>
<div class="b" style="left:0px;top:224px;width:1010px;height:1px;background:#939c97;"></div>
<div class="b" style="left:29px;top:225px;width:1px;height:442px;background:#b4b4b4;"></div>
<div class="b" style="left:30px;top:245px;width:980px;height:1px;background:#d5d7d9;"></div>
<div class="b" style="left:2px;top:245px;width:27px;height:1px;background:#b4b4b4;"></div>
<span class="t" id="t61" style="left:11.90px;top:228px;font-size:14.2px;line-height:16px;color:#111;transform:scaleX(0.8571);-webkit-text-stroke:0.15px;">1</span>
<div class="b" style="left:30px;top:266px;width:980px;height:1px;background:#d5d7d9;"></div>
<div class="b" style="left:2px;top:266px;width:27px;height:1px;background:#b4b4b4;"></div>
<span class="t" id="t62" style="left:11.40px;top:249px;font-size:14.2px;line-height:16px;color:#111;transform:scaleX(0.8750);-webkit-text-stroke:0.15px;">2</span>
<div class="b" style="left:30px;top:287px;width:980px;height:1px;background:#d5d7d9;"></div>
<div class="b" style="left:2px;top:287px;width:27px;height:1px;background:#b4b4b4;"></div>
<span class="t" id="t63" style="left:11.40px;top:270px;font-size:14.2px;line-height:16px;color:#111;transform:scaleX(0.8750);-webkit-text-stroke:0.15px;">3</span>
<div class="b" style="left:30px;top:308px;width:980px;height:1px;background:#d5d7d9;"></div>
<div class="b" style="left:2px;top:308px;width:27px;height:1px;background:#b4b4b4;"></div>
<span class="t" id="t64" style="left:11.40px;top:291px;font-size:14.2px;line-height:16px;color:#0a6b38;transform:scaleX(0.8750);-webkit-text-stroke:0.15px;">4</span>
<div class="b" style="left:30px;top:329px;width:980px;height:1px;background:#d5d7d9;"></div>
<div class="b" style="left:2px;top:329px;width:27px;height:1px;background:#b4b4b4;"></div>
<span class="t" id="t65" style="left:11.40px;top:312px;font-size:14.2px;line-height:16px;color:#111;transform:scaleX(0.8750);-webkit-text-stroke:0.15px;">5</span>
<div class="b" style="left:30px;top:350px;width:980px;height:1px;background:#d5d7d9;"></div>
<div class="b" style="left:2px;top:350px;width:27px;height:1px;background:#b4b4b4;"></div>
<span class="t" id="t66" style="left:11.40px;top:333px;font-size:14.2px;line-height:16px;color:#111;transform:scaleX(0.8750);-webkit-text-stroke:0.15px;">6</span>
<div class="b" style="left:30px;top:371px;width:980px;height:1px;background:#d5d7d9;"></div>
<div class="b" style="left:2px;top:371px;width:27px;height:1px;background:#b4b4b4;"></div>
<span class="t" id="t67" style="left:11.40px;top:354px;font-size:14.2px;line-height:16px;color:#111;transform:scaleX(0.8750);-webkit-text-stroke:0.15px;">7</span>
<div class="b" style="left:30px;top:392px;width:980px;height:1px;background:#d5d7d9;"></div>
<div class="b" style="left:2px;top:392px;width:27px;height:1px;background:#b4b4b4;"></div>
<span class="t" id="t68" style="left:11.40px;top:375px;font-size:14.2px;line-height:16px;color:#111;transform:scaleX(0.8750);-webkit-text-stroke:0.15px;">8</span>
<div class="b" style="left:30px;top:413px;width:980px;height:1px;background:#d5d7d9;"></div>
<div class="b" style="left:2px;top:413px;width:27px;height:1px;background:#b4b4b4;"></div>
<span class="t" id="t69" style="left:11.40px;top:396px;font-size:14.2px;line-height:16px;color:#111;transform:scaleX(0.8750);-webkit-text-stroke:0.15px;">9</span>
<div class="b" style="left:30px;top:434px;width:980px;height:1px;background:#d5d7d9;"></div>
<div class="b" style="left:2px;top:434px;width:27px;height:1px;background:#b4b4b4;"></div>
<span class="t" id="t70" style="left:6.50px;top:417px;font-size:14.2px;line-height:16px;color:#111;letter-spacing:0.400px;-webkit-text-stroke:0.15px;">10</span>
<div class="b" style="left:30px;top:455px;width:980px;height:1px;background:#d5d7d9;"></div>
<div class="b" style="left:2px;top:455px;width:27px;height:1px;background:#b4b4b4;"></div>
<span class="t" id="t71" style="left:7.00px;top:438px;font-size:14.2px;line-height:16px;color:#111;letter-spacing:1.400px;-webkit-text-stroke:0.15px;">11</span>
<div class="b" style="left:30px;top:476px;width:980px;height:1px;background:#d5d7d9;"></div>
<div class="b" style="left:2px;top:476px;width:27px;height:1px;background:#b4b4b4;"></div>
<span class="t" id="t72" style="left:6.50px;top:459px;font-size:14.2px;line-height:16px;color:#111;letter-spacing:0.400px;-webkit-text-stroke:0.15px;">12</span>
<div class="b" style="left:30px;top:497px;width:980px;height:1px;background:#d5d7d9;"></div>
<div class="b" style="left:2px;top:497px;width:27px;height:1px;background:#b4b4b4;"></div>
<span class="t" id="t73" style="left:6.50px;top:480px;font-size:14.2px;line-height:16px;color:#111;letter-spacing:0.400px;-webkit-text-stroke:0.15px;">13</span>
<div class="b" style="left:30px;top:518px;width:980px;height:1px;background:#d5d7d9;"></div>
<div class="b" style="left:2px;top:518px;width:27px;height:1px;background:#b4b4b4;"></div>
<span class="t" id="t74" style="left:6.50px;top:501px;font-size:14.2px;line-height:16px;color:#111;letter-spacing:0.400px;-webkit-text-stroke:0.15px;">14</span>
<div class="b" style="left:30px;top:539px;width:980px;height:1px;background:#d5d7d9;"></div>
<div class="b" style="left:2px;top:539px;width:27px;height:1px;background:#b4b4b4;"></div>
<span class="t" id="t75" style="left:6.50px;top:522px;font-size:14.2px;line-height:16px;color:#111;letter-spacing:0.400px;-webkit-text-stroke:0.15px;">15</span>
<div class="b" style="left:30px;top:560px;width:980px;height:1px;background:#d5d7d9;"></div>
<div class="b" style="left:2px;top:560px;width:27px;height:1px;background:#b4b4b4;"></div>
<span class="t" id="t76" style="left:6.50px;top:543px;font-size:14.2px;line-height:16px;color:#111;letter-spacing:0.400px;-webkit-text-stroke:0.15px;">16</span>
<div class="b" style="left:30px;top:581px;width:980px;height:1px;background:#d5d7d9;"></div>
<div class="b" style="left:2px;top:581px;width:27px;height:1px;background:#b4b4b4;"></div>
<span class="t" id="t77" style="left:6.50px;top:564px;font-size:14.2px;line-height:16px;color:#111;letter-spacing:0.400px;-webkit-text-stroke:0.15px;">17</span>
<div class="b" style="left:30px;top:602px;width:980px;height:1px;background:#d5d7d9;"></div>
<div class="b" style="left:2px;top:602px;width:27px;height:1px;background:#b4b4b4;"></div>
<span class="t" id="t78" style="left:6.50px;top:585px;font-size:14.2px;line-height:16px;color:#111;letter-spacing:0.400px;-webkit-text-stroke:0.15px;">18</span>
<div class="b" style="left:30px;top:623px;width:980px;height:1px;background:#d5d7d9;"></div>
<div class="b" style="left:2px;top:623px;width:27px;height:1px;background:#b4b4b4;"></div>
<span class="t" id="t79" style="left:6.50px;top:606px;font-size:14.2px;line-height:16px;color:#111;letter-spacing:0.400px;-webkit-text-stroke:0.15px;">19</span>
<div class="b" style="left:30px;top:644px;width:980px;height:1px;background:#d5d7d9;"></div>
<div class="b" style="left:2px;top:644px;width:27px;height:1px;background:#b4b4b4;"></div>
<span class="t" id="t80" style="left:6.50px;top:627px;font-size:14.2px;line-height:16px;color:#111;transform:scaleX(0.9625);-webkit-text-stroke:0.15px;">20</span>
<div class="b" style="left:30px;top:665px;width:980px;height:1px;background:#d5d7d9;"></div>
<div class="b" style="left:2px;top:665px;width:27px;height:1px;background:#b4b4b4;"></div>
<span class="t" id="t81" style="left:6.50px;top:648px;font-size:14.2px;line-height:16px;color:#111;transform:scaleX(0.9625);-webkit-text-stroke:0.15px;">21</span>
<div class="b" style="left:28px;top:287px;width:2px;height:22px;background:#0a6b38;"></div>
<div class="b" style="left:101px;top:223px;width:73px;height:2px;background:#0a6b38;"></div>
<div class="b" style="left:1009px;top:224px;width:1px;height:444px;background:#a0a0a0;"></div>
<div class="b" style="left:0px;top:667px;width:1010px;height:1px;background:#8f9793;"></div>
<div class="b" style="left:247px;top:247px;width:69px;height:18px;background:#d4d5d6;"></div>
<div class="b" style="left:244px;top:244px;width:75px;height:24px;border:2px solid #0a64c2;box-sizing:border-box;"></div>
<div class="b" style="left:243px;top:243px;width:5px;height:5px;background:#0a64c2;outline:1px solid #fff;"></div>
<div class="b" style="left:315px;top:243px;width:5px;height:5px;background:#0a64c2;outline:1px solid #fff;"></div>
<div class="b" style="left:243px;top:264px;width:5px;height:5px;background:#0a64c2;outline:1px solid #fff;"></div>
<div class="b" style="left:315px;top:264px;width:5px;height:5px;background:#0a64c2;outline:1px solid #fff;"></div>
<div class="b" style="left:102px;top:288px;width:136px;height:20px;background:#fff;"></div>
<div class="b" style="left:100px;top:286px;width:74px;height:2px;background:#0a6b38;"></div>
<div class="b" style="left:100px;top:286px;width:2px;height:24px;background:#0a6b38;"></div>
<div class="b" style="left:100px;top:308px;width:74px;height:2px;background:#0a6b38;"></div>
<div class="b" style="left:171px;top:308px;width:5px;height:4px;background:#0a6b38;outline:1px solid #fff;"></div>
<span class="t" id="cellf" style="left:104.00px;top:289px;font-size:14.3px;line-height:18px;color:#000;-webkit-text-stroke:0.15px;letter-spacing:0.333px;transform:scaleX(1.0000)">=7*<i>D2</i>+17*<i>D2</i>-9*<i>D2</i></span>
<div class="b" style="left:235px;top:290px;width:1px;height:18px;background:#cfcfcf;"></div>
<div class="b" style="left:95.3px;top:281px;width:145.7px;height:32.3px;border:3px solid #ff0000;box-sizing:border-box;border-radius:9px;"></div>
<div class="b" style="left:0px;top:668px;width:1032px;height:27px;background:#e6e6e6;"></div>
<svg class="b" style="left:28px;top:676px;" width="5" height="9" viewBox="0 0 5 9"><path d="M5 0V9L0 4.5Z" fill="#c2c2c2"/></svg>
<svg class="b" style="left:57px;top:676px;" width="5" height="9" viewBox="0 0 5 9"><path d="M0 0V9L5 4.5Z" fill="#c2c2c2"/></svg>
<div class="b" style="left:101px;top:671px;width:1px;height:20px;background:#9a9a9a;"></div>
<span class="t" id="t82" style="left:116.30px;top:673px;font-size:13.5px;line-height:15px;color:#3a3a3a;transform:scaleX(0.9587);">microexcel.ru</span>
<div class="b" style="left:208px;top:666px;width:60px;height:26px;background:#fff;box-sizing:border-box;border-left:1px solid #b0b0b0;border-right:1px solid #b0b0b0;border-bottom:2px solid #0a6b38;"></div>
<span class="t" id="t83" style="left:220.00px;top:673px;font-size:13px;line-height:15px;color:#0a6b38;font-weight:bold;transform:scaleX(0.9211);">Лист1</span>
<svg class="b" style="left:300px;top:672px;" width="18" height="18" viewBox="0 0 18 18"><circle cx="9" cy="9" r="7.6" fill="none" stroke="#555" stroke-width="1.1"/><path d="M9 5V13M5 9H13" stroke="#555" stroke-width="1.5"/></svg>
<div class="b" style="left:619px;top:676px;width:2px;height:2px;background:#b4b4b4;"></div>
<div class="b" style="left:619px;top:680px;width:2px;height:2px;background:#b4b4b4;"></div>
<div class="b" style="left:619px;top:684px;width:2px;height:2px;background:#b4b4b4;"></div>
<div class="b" style="left:636px;top:674px;width:15px;height:15px;background:#fff;border:1px solid #ababab;box-sizing:border-box;"></div>
<svg class="b" style="left:641px;top:678px;" width="4" height="7" viewBox="0 0 4 7"><path d="M4 0V7L0 3.5Z" fill="#555"/></svg>
<div class="b" style="left:651px;top:674px;width:317px;height:15px;background:#fff;border:1px solid #ababab;box-sizing:border-box;"></div>
<div class="b dot" style="left:968px;top:674px;width:27px;height:15px;"></div>
<div class="b" style="left:995px;top:674px;width:15px;height:15px;background:#fff;border:1px solid #ababab;box-sizing:border-box;"></div>
<svg class="b" style="left:1001px;top:678px;" width="4" height="7" viewBox="0 0 4 7"><path d="M0 0V7L4 3.5Z" fill="#555"/></svg>
<div class="b" style="left:1013px;top:206px;width:15px;height:15px;background:#fff;border:1px solid #ababab;box-sizing:border-box;"></div>
<svg class="b" style="left:1017px;top:211px;" width="7" height="4" viewBox="0 0 7 4"><path d="M0 4L3.5 0L7 4Z" fill="#555"/></svg>
<div class="b" style="left:1013px;top:221px;width:15px;height:411px;background:#fff;border:1px solid #ababab;box-sizing:border-box;"></div>
<div class="b dot" style="left:1013px;top:632px;width:15px;height:21px;"></div>
<div class="b" style="left:1013px;top:653px;width:15px;height:15px;background:#fff;border:1px solid #ababab;box-sizing:border-box;"></div>
<svg class="b" style="left:1017px;top:659px;" width="7" height="4" viewBox="0 0 7 4"><path d="M0 0L3.5 4L7 0Z" fill="#555"/></svg>
<div class="b" style="left:0px;top:695px;width:1032px;height:1px;background:#cfcfcf;"></div>
<div class="b" style="left:0px;top:696px;width:1032px;height:22px;background:#f3f3f3;"></div>
<span class="t" id="t84" style="left:9.60px;top:699px;font-size:11px;line-height:12px;color:#444;letter-spacing:0.080px;">Правка</span>
<svg class="b" style="left:73px;top:699px;" width="14" height="14" viewBox="0 0 14 14"><path d="M1.5 4V12.5H12.5V1.5H6" fill="none" stroke="#5a5a5a" stroke-width="1.1"/><rect x="7" y="1" width="6" height="2.6" fill="#5a5a5a"/><circle cx="3.2" cy="3.2" r="3.2" fill="#5a5a5a" stroke="#f3f3f3" stroke-width="0.8"/><rect x="4.2" y="6.2" width="1.8" height="1.4" fill="#5a5a5a"/><rect x="6.8" y="6.2" width="1.8" height="1.4" fill="#5a5a5a"/><rect x="9.4" y="6.2" width="1.8" height="1.4" fill="#5a5a5a"/><rect x="4.2" y="8.4" width="1.8" height="1.4" fill="#5a5a5a"/><rect x="6.8" y="8.4" width="1.8" height="1.4" fill="#5a5a5a"/><rect x="9.4" y="8.4" width="1.8" height="1.4" fill="#5a5a5a"/><rect x="4.2" y="10.6" width="1.8" height="1.4" fill="#5a5a5a"/><rect x="6.8" y="10.6" width="1.8" height="1.4" fill="#5a5a5a"/><rect x="9.4" y="10.6" width="1.8" height="1.4" fill="#5a5a5a"/></svg>
<svg class="b" style="left:743px;top:699px;" width="14" height="13" viewBox="0 0 14 13"><rect x="0.5" y="0.5" width="12" height="12" fill="none" stroke="#555"/><path d="M4.5 0.5V12.5M8.5 0.5V12.5M0.5 4.5H12.5M0.5 8.5H12.5" stroke="#555"/></svg>
<svg class="b" style="left:781px;top:699px;" width="14" height="13" viewBox="0 0 14 13"><rect x="0.5" y="0.5" width="13" height="12" fill="none" stroke="#555"/><rect x="3.5" y="2.5" width="7" height="8" fill="none" stroke="#555"/><path d="M5.5 4.5H8.5M5.5 6.5H8.5M5.5 8.5H8.5" stroke="#555" stroke-width="1"/></svg>
<svg class="b" style="left:819px;top:699px;" width="14" height="13" viewBox="0 0 14 13"><rect x="0.5" y="0.5" width="13" height="12" fill="none" stroke="#555"/><path d="M4.5 0.5V6.5M0.5 6.5H8.5V0.5" fill="none" stroke="#555"/></svg>
<div class="b" style="left:850px;top:705px;width:6.5px;height:2px;background:#555;"></div>
<div class="b" style="left:860px;top:706px;width:100px;height:1px;background:#a0a0a0;"></div>
<div class="b" style="left:910px;top:704px;width:1px;height:6px;background:#a0a0a0;"></div>
<svg class="b" style="left:963px;top:702px;" width="9" height="9" viewBox="0 0 9 9"><path d="M4.3 0.3V8.3M0.3 4.3H8.3" stroke="#505050" stroke-width="2"/></svg>
<span class="t" id="t85" style="left:983.00px;top:699px;font-size:11px;line-height:12px;color:#a0a0a0;transform:scaleX(0.9194);">100 %</span>
<div class="b" style="left:1px;top:65px;width:1px;height:652px;background:#fcf9fb;"></div>
<div class="b" style="left:1030px;top:65px;width:1px;height:652px;background:#fcf9fb;"></div>
<div class="b" style="left:1px;top:716px;width:1030px;height:1px;background:#fcf9fb;"></div>
<div class="b" style="left:0px;top:0px;width:1px;height:718px;background:#007540;"></div>
<div class="b" style="left:1031px;top:0px;width:1px;height:718px;background:#007540;"></div>
<div class="b" style="left:0px;top:717px;width:1032px;height:1px;background:#007540;"></div>
</body></html>
